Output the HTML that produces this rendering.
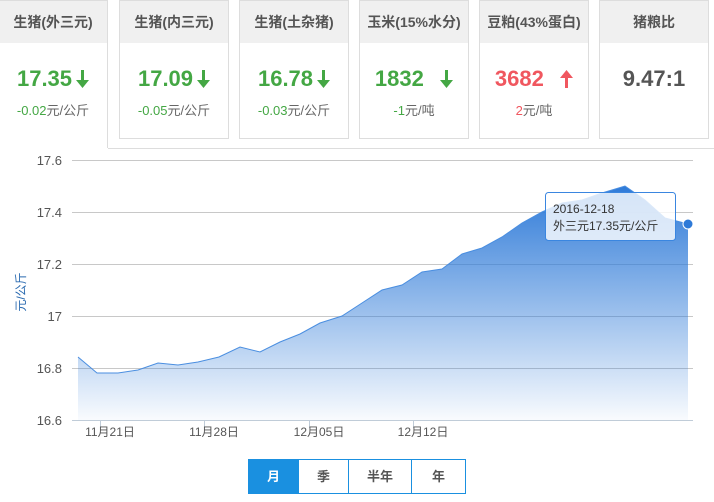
<!DOCTYPE html>
<html><head><meta charset="utf-8"><style>
body{margin:0;width:714px;height:502px;background:#fff;font-family:"Liberation Sans","Noto Sans CJK SC",sans-serif;position:relative;overflow:hidden}
.card{position:absolute;top:0;width:108px;height:137px;border:1px solid #ddd;background:#fff;text-align:center}
.card .h{height:42px;background:#f0f0f0;line-height:42px;font-size:14px;font-weight:bold;color:#555}
.card .v{margin-top:21px;font-size:22px;font-weight:bold;height:30px;line-height:30px}
.card .v svg{vertical-align:-2px;margin-left:4px}
.card .c{margin-top:6px;font-size:13px;color:#666}
.g{color:#44a744}.r{color:#f0575f}
.panel{position:absolute;left:108px;top:148px;width:606px;height:1px;background:#ddd}
.pr{position:absolute;left:707px;top:148px;width:1px;height:300px;background:#ddd}
.btns{position:absolute;left:248px;top:459px;height:33px;border:1px solid #1a90e0;display:flex;font-size:13px;font-weight:bold;color:#555}
.btns div{line-height:33px;text-align:center;border-left:1px solid #1a90e0}
</style></head><body>
<div class="card" style="left:-1px;border-left:none;border-bottom:none;height:147px"><div class="h">生猪(外三元)</div><div class="v g">17.35<svg width="13" height="18"><path d="M5,0h3v10h5l-6.5,8L0,10h5z" fill="#44a744"/></svg></div><div class="c"><span class="g">-0.02</span>元/公斤</div></div>
<div class="card" style="left:119px"><div class="h">生猪(内三元)</div><div class="v g">17.09<svg width="13" height="18"><path d="M5,0h3v10h5l-6.5,8L0,10h5z" fill="#44a744"/></svg></div><div class="c"><span class="g">-0.05</span>元/公斤</div></div>
<div class="card" style="left:239px"><div class="h">生猪(土杂猪)</div><div class="v g">16.78<svg width="13" height="18"><path d="M5,0h3v10h5l-6.5,8L0,10h5z" fill="#44a744"/></svg></div><div class="c"><span class="g">-0.03</span>元/公斤</div></div>
<div class="card" style="left:359px"><div class="h">玉米(15%水分)</div><div class="v g">1832 &nbsp;<svg width="13" height="18"><path d="M5,0h3v10h5l-6.5,8L0,10h5z" fill="#44a744"/></svg></div><div class="c"><span class="g">-1</span>元/吨</div></div>
<div class="card" style="left:479px"><div class="h">豆粕(43%蛋白)</div><div class="v r">3682 &nbsp;<svg width="13" height="18"><path d="M5,18h3V8h5L6.5,0L0,8h5z" fill="#f0575f"/></svg></div><div class="c"><span class="r">2</span>元/吨</div></div>
<div class="card" style="left:599px"><div class="h">猪粮比</div><div class="v" style="color:#555">9.47:1</div></div>
<div class="panel"></div>
<svg style="position:absolute;left:0;top:0" width="714" height="502">
<defs><linearGradient id="gr" x1="0" y1="0" x2="0" y2="1"><stop offset="0" stop-color="#2e7ad8"/><stop offset="1" stop-color="#2e7ad8" stop-opacity="0.03"/></linearGradient></defs>
<g stroke="#c8c8c8" stroke-width="1"><line x1="72" y1="160.5" x2="693" y2="160.5"/><line x1="72" y1="212.5" x2="693" y2="212.5"/><line x1="72" y1="264.5" x2="693" y2="264.5"/><line x1="72" y1="316.5" x2="693" y2="316.5"/><line x1="72" y1="368.5" x2="693" y2="368.5"/></g>
<path d="M78,357 L97,373 118,373 138,370 158,363 178,365 198,362 219,357 240,347 260,352 280,342 300,334 320,323 342,316 362,303 382,290 402,285 422,272 442,269 462,254 482,248 502,237 522,223 542,212 562,203 582,200 602,193 625,186 645,200 665,218 688,224 L688,420 L78,420 Z" fill="url(#gr)"/>
<polyline points="78,357 97,373 118,373 138,370 158,363 178,365 198,362 219,357 240,347 260,352 280,342 300,334 320,323 342,316 362,303 382,290 402,285 422,272 442,269 462,254 482,248 502,237 522,223 542,212 562,203 582,200 602,193 625,186 645,200 665,218 688,224" fill="none" stroke="#4a8ee0" stroke-width="1"/>
<line x1="72" y1="420.5" x2="693" y2="420.5" stroke="#c0ccd8"/>
<g stroke="#c0ccd8"><line x1="100.5" y1="420" x2="100.5" y2="428"/><line x1="204.5" y1="420" x2="204.5" y2="428"/><line x1="309.5" y1="420" x2="309.5" y2="428"/><line x1="413.5" y1="420" x2="413.5" y2="428"/></g>
<g font-size="13" fill="#555" text-anchor="end"><text x="62" y="165">17.6</text><text x="62" y="217">17.4</text><text x="62" y="269">17.2</text><text x="62" y="321">17</text><text x="62" y="373">16.8</text><text x="62" y="425">16.6</text></g>
<g font-size="12" fill="#555" text-anchor="middle"><text x="110" y="436">11月21日</text><text x="214" y="436">11月28日</text><text x="319" y="436">12月05日</text><text x="423" y="436">12月12日</text></g>
<text transform="translate(25,292) rotate(-90)" font-size="12" fill="#2a6ab0" text-anchor="middle">元/公斤</text>
<circle cx="688" cy="224" r="5" fill="#2e7ad8" stroke="#fff" stroke-width="1"/>
<rect x="545.5" y="192.5" width="130" height="48" rx="3" fill="#fff" fill-opacity="0.8" stroke="#3a86e0"/>
<text x="553" y="213" font-size="12" fill="#333">2016-12-18</text>
<text x="553" y="230" font-size="12" fill="#333">外三元17.35元/公斤</text>
</svg>
<div class="btns"><div style="width:49px;background:#1a90e0;color:#fff;border-left:none">月</div><div style="width:49px">季</div><div style="width:62px">半年</div><div style="width:53px">年</div></div>
</body></html>
